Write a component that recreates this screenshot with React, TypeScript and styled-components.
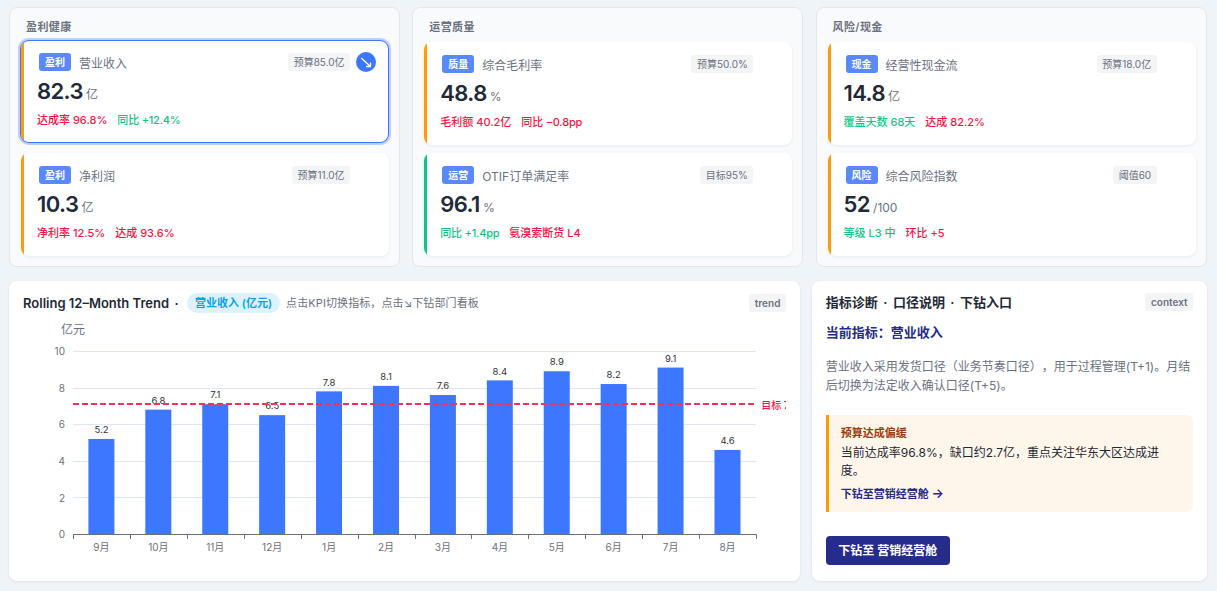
import React from "react";
import styled, { createGlobalStyle, css } from "styled-components";

const sans = `Inter, "Noto Sans CJK SC", sans-serif`;

const GlobalStyle = createGlobalStyle`
  *, *::before, *::after { box-sizing: border-box; }
  html, body { height: 100%; }
  body {
    margin: 0;
    background: #eef4f8;
    font-family: ${sans};
    color: #1f2937;
    overflow: hidden;
  }
`;

const Page = styled.main`
  display: flex;
  flex-direction: column;
  gap: 14px;
  padding: 7px 10px 10px 9px;
`;

const GroupGrid = styled.div`
  display: grid;
  grid-template-columns: repeat(3, 391.2px);
  column-gap: 12.1px;
`;

const Group = styled.section`
  height: 260px;
  padding: 9px 10px 0 11px;
  background: #f9fafc;
  border: 1px solid #e2e7ee;
  border-radius: 8px;
`;

const GroupTitle = styled.h2`
  margin: 0 0 7px 5px;
  height: 18px;
  font-size: 11px;
  line-height: 20px;
  font-weight: 600;
  letter-spacing: 0.4px;
  color: #6b7280;
`;

const CardStack = styled.div`
  display: flex;
  flex-direction: column;
  gap: 8px;
`;

const Kpi = styled.article<{ $accent: string; $selected?: boolean }>`
  position: relative;
  height: 103px;
  padding: 13px 13px 0 16px;
  background: #fff;
  border-radius: 8px;
  overflow: hidden;
  box-shadow: 0 1px 3px rgba(15, 23, 42, 0.08);

  &::before {
    content: "";
    position: absolute;
    left: 0;
    top: 0;
    bottom: 0;
    width: 3px;
    background: ${(p) => p.$accent};
  }

  ${(p) =>
    p.$selected &&
    css`
      transform: translateY(-2px);
      box-shadow: 0 0 0 1px #3d77ff, 0 0 0 3px rgba(61, 119, 255, 0.32);
      height: 101px;
      margin: 1px 1px 1px 0;
      padding-top: 12px;
      padding-right: 12px;
    `}
`;

const KpiHead = styled.div`
  display: flex;
  align-items: center;
  height: 18px;
  padding-left: 2px;
`;

const Tag = styled.span`
  flex: none;
  width: 32px;
  height: 18px;
  border-radius: 3px;
  background: #5b88ff;
  color: #fff;
  font-size: 10px;
  line-height: 18px;
  font-weight: 600;
  text-align: center;
`;

const KpiName = styled.span`
  margin-left: 8px;
  padding-top: 4px;
  font-size: 12px;
  line-height: 18px;
  color: #6b7280;
`;

const Chip = styled.span<{ $strong?: boolean }>`
  flex: none;
  height: 18px;
  margin-left: auto;
  padding: 0 5.6px;
  border-radius: 3px;
  background: #f2f4f6;
  color: #6b7280;
  font-size: 10px;
  line-height: 18px;
  font-weight: ${(p) => (p.$strong ? 600 : 400)};
  white-space: nowrap;
`;

const DrillSlot = styled.span`
  flex: none;
  display: flex;
  width: 20px;
  height: 20px;
  margin-left: 6px;
`;

const ValueRow = styled.div`
  display: flex;
  align-items: baseline;
  height: 28px;
  margin-top: 6px;
  gap: 3.2px;
`;

const Value = styled.span`
  font-size: 22px;
  line-height: 28px;
  font-weight: 600;
  letter-spacing: -0.6px;
  color: #1f2937;
`;

const Unit = styled.span`
  font-size: 12px;
  line-height: 18px;
  color: #6b7280;
`;

const DeltaRow = styled.div`
  display: flex;
  gap: 10px;
  height: 18px;
  margin-top: 6px;
`;

const Delta = styled.span<{ $good?: boolean; $signed?: boolean }>`
  font-size: 11px;
  line-height: 18px;
  font-weight: 500;
  white-space: pre;
  letter-spacing: ${(p) => (p.$signed ? "-0.22px" : "0")};
  color: ${(p) => (p.$good ? "#0fc584" : "#fa1545")};
`;

const BottomGrid = styled.div`
  display: grid;
  grid-template-columns: 791px 395.4px;
  column-gap: 11.8px;
`;

const Panel = styled.section`
  height: 300px;
  padding: 12px 14px 14px;
  background: #fff;
  border-radius: 8px;
  box-shadow: 0 1px 3px rgba(15, 23, 42, 0.08);
`;

const PanelHead = styled.div<{ $tall?: boolean }>`
  display: flex;
  align-items: center;
  height: ${(p) => (p.$tall ? "20px" : "18px")};
`;

const PanelTitle = styled.h3`
  margin: 0;
  font-size: 13px;
  line-height: 20px;
  font-weight: 600;
  white-space: pre;
`;

const Dot = styled.span`
  margin: 0 2.2px;
`;

const Pill = styled.span`
  height: 20px;
  margin-left: 6.2px;
  padding: 0 8px;
  border-radius: 10px;
  background: #dcf2fe;
  color: #0aa2f0;
  font-size: 11px;
  line-height: 20px;
  font-weight: 600;
  white-space: nowrap;
`;

const Hint = styled.span`
  margin-left: 6px;
  font-size: 11px;
  line-height: 20px;
  letter-spacing: 0.1px;
  color: #6b7280;
  white-space: nowrap;
`;

const Chart = styled.svg`
  display: block;
  width: 763px;
  height: 250px;
  margin-top: 6px;
  overflow: hidden;
  font-family: ${sans};
`;

const MetricTitle = styled.h4`
  margin: 11px 0 0;
  font-size: 13px;
  line-height: 20px;
  font-weight: 600;
  color: #262c8c;
`;

const Description = styled.p`
  margin: 15px 0 0;
  font-size: 12px;
  line-height: 19.2px;
  color: #6b7280;
  white-space: nowrap;
  text-spacing-trim: space-all;
`;

const Alert = styled.div`
  height: 97px;
  margin-top: 20px;
  padding: 9px 12px;
  border-left: 3px solid #ff9b05;
  border-radius: 0 6px 6px 0;
  background: #fff6eb;
`;

const AlertTitle = styled.div`
  font-size: 11px;
  line-height: 18px;
  font-weight: 600;
  color: #9f3c0c;
`;

const AlertText = styled.div`
  margin-top: 2px;
  font-size: 12px;
  line-height: 18px;
  white-space: nowrap;
`;

const AlertLink = styled.a`
  display: block;
  margin-top: 5px;
  font-size: 11px;
  line-height: 18px;
  font-weight: 600;
  color: #262c8c;
`;

const LinkArrow = styled.span`
  font-size: 13px;
  line-height: 0;
`;

const Button = styled.button`
  display: block;
  width: 124px;
  height: 29px;
  margin: 24px 0 0;
  padding: 0;
  border: 0;
  border-radius: 4px;
  background: #262c8c;
  color: #fff;
  font-family: inherit;
  font-size: 12px;
  line-height: 29px;
  font-weight: 600;
`;

type DeltaItem = { text: string; good?: boolean };
type KpiItem = {
  tag: string;
  name: string;
  chip: string;
  value: string;
  unit: string;
  deltas: DeltaItem[];
  accent?: string;
  selected?: boolean;
};

const ORANGE = "#ff9b05";
const GREEN = "#0fc584";

const groups: { title: string; items: KpiItem[] }[] = [
  {
    title: "盈利健康",
    items: [
      {
        tag: "盈利", name: "营业收入", chip: "预算85.0亿", value: "82.3", unit: "亿", selected: true,
        deltas: [{ text: "达成率 96.8%" }, { text: "同比 +12.4%", good: true }],
      },
      {
        tag: "盈利", name: "净利润", chip: "预算11.0亿", value: "10.3", unit: "亿",
        deltas: [{ text: "净利率 12.5%" }, { text: "达成 93.6%" }],
      },
    ],
  },
  {
    title: "运营质量",
    items: [
      {
        tag: "质量", name: "综合毛利率", chip: "预算50.0%", value: "48.8", unit: "%",
        deltas: [{ text: "毛利额 40.2亿" }, { text: "同比 −0.8pp" }],
      },
      {
        tag: "运营", name: "OTIF订单满足率", chip: "目标95%", value: "96.1", unit: "%", accent: GREEN,
        deltas: [{ text: "同比 +1.4pp", good: true }, { text: "氨溴索断货 L4" }],
      },
    ],
  },
  {
    title: "风险/现金",
    items: [
      {
        tag: "现金", name: "经营性现金流", chip: "预算18.0亿", value: "14.8", unit: "亿",
        deltas: [{ text: "覆盖天数 68天", good: true }, { text: "达成 82.2%" }],
      },
      {
        tag: "风险", name: "综合风险指数", chip: "阈值60", value: "52", unit: "/100",
        deltas: [{ text: "等级 L3 中", good: true }, { text: "环比 +5" }],
      },
    ],
  },
];

function DrillIcon() {
  return (
    <svg width="20" height="20" viewBox="0 0 20 20">
      <circle cx="10" cy="10" r="10" fill="#3d77ff" />
      <path d="M5.3 6.1 14.4 14.4M10 14.5h4.5v-4" fill="none" stroke="#fff" strokeWidth="1.3" />
    </svg>
  );
}

function KpiCard({ item }: { item: KpiItem }) {
  return (
    <Kpi $accent={item.accent ?? ORANGE} $selected={item.selected}>
      <KpiHead>
        <Tag>{item.tag}</Tag>
        <KpiName>{item.name}</KpiName>
        <Chip>{item.chip}</Chip>
        <DrillSlot>{item.selected && <DrillIcon />}</DrillSlot>
      </KpiHead>
      <ValueRow>
        <Value>{item.value}</Value>
        <Unit>{item.unit}</Unit>
      </ValueRow>
      <DeltaRow>
        {item.deltas.map((d) => (
          <Delta key={d.text} $good={d.good} $signed={/[+−]\d+\./.test(d.text)}>{d.text}</Delta>
        ))}
      </DeltaRow>
    </Kpi>
  );
}

const months = ["9月", "10月", "11月", "12月", "1月", "2月", "3月", "4月", "5月", "6月", "7月", "8月"];
const values = [5.2, 6.8, 7.1, 6.5, 7.8, 8.1, 7.6, 8.4, 8.9, 8.2, 9.1, 4.6];

const LEFT = 50;
const RIGHT = 733;
const BASE = 215.5;
const UNIT = 18.3;
const STEP = (RIGHT - LEFT) / 12;
const yOf = (v: number) => BASE - v * UNIT;

function TrendChart() {
  return (
    <Chart viewBox="0 0 763 250">
      <text x={LEFT} y={15} fontSize={12} fill="#6b7280" textAnchor="middle">亿元</text>
      {[0, 2, 4, 6, 8, 10].map((t) => (
        <g key={t}>
          {t > 0 && (
            <path d={`M${LEFT} ${Math.round(yOf(t) - 0.5) + 0.5}H${RIGHT}`} stroke="#e0e6f1" />
          )}
          <text x={42} y={yOf(t) + 3.6} fontSize={10} fill="#6e7079" textAnchor="end">{t}</text>
        </g>
      ))}
      {values.map((v, i) => (
        <rect key={i} x={LEFT + STEP * i + 15.4} y={yOf(v) - 0.4} width={26} height={v * UNIT + 0.4} fill="#3d77ff" />
      ))}
      <path d={`M${LEFT} ${BASE}H${RIGHT + 0.5}`} stroke="#6e7079" />
      {Array.from({ length: 13 }, (_, i) => (
        <path key={i} d={`M${Math.round(LEFT + STEP * i) + 0.5} ${BASE}v4.5`} stroke="#6e7079" />
      ))}
      {months.map((m, i) => (
        <text key={m} x={LEFT + STEP * (i + 0.5)} y={232} fontSize={10} fill="#6e7079" textAnchor="middle">{m}</text>
      ))}
      {values.map((v, i) => (
        <text key={i} x={LEFT + STEP * (i + 0.5)} y={yOf(v) - 6.2} fontSize={9.5} fill="#333" textAnchor="middle">{v.toFixed(1)}</text>
      ))}
      <path d={`M${LEFT} 85H${RIGHT - 2}`} stroke="#fb2f58" strokeWidth={1.8} strokeDasharray="6 3" />
      <text x={738.2} y={89.8} fontSize={10} fontWeight={500} fill="#fa1545">目标 7.1</text>
    </Chart>
  );
}

export default function App() {
  return (
    <>
      <GlobalStyle />
      <Page>
        <GroupGrid>
          {groups.map((g) => (
            <Group key={g.title}>
              <GroupTitle>{g.title}</GroupTitle>
              <CardStack>
                {g.items.map((item) => (
                  <KpiCard key={item.name} item={item} />
                ))}
              </CardStack>
            </Group>
          ))}
        </GroupGrid>
        <BottomGrid>
          <Panel>
            <PanelHead $tall>
              <PanelTitle>Rolling 12–Month Trend <Dot>·</Dot></PanelTitle>
              <Pill>营业收入 (亿元)</Pill>
              <Hint>点击KPI切换指标，点击↘下钻部门看板</Hint>
              <Chip $strong>trend</Chip>
            </PanelHead>
            <TrendChart />
          </Panel>
          <Panel>
            <PanelHead>
              <PanelTitle>指标诊断 <Dot>·</Dot> 口径说明 <Dot>·</Dot> 下钻入口</PanelTitle>
              <Chip $strong>context</Chip>
            </PanelHead>
            <MetricTitle>当前指标：营业收入</MetricTitle>
            <Description>
              营业收入采用发货口径（业务节奏口径），用于过程管理(T+1)。月结
              <br />
              后切换为法定收入确认口径(T+5)。
            </Description>
            <Alert>
              <AlertTitle>预算达成偏缓</AlertTitle>
              <AlertText>
                当前达成率96.8%，缺口约2.7亿，重点关注华东大区达成进
                <br />
                度。
              </AlertText>
              <AlertLink>下钻至营销经营舱 <LinkArrow>→</LinkArrow></AlertLink>
            </Alert>
            <Button>下钻至 营销经营舱</Button>
          </Panel>
        </BottomGrid>
      </Page>
    </>
  );
}
